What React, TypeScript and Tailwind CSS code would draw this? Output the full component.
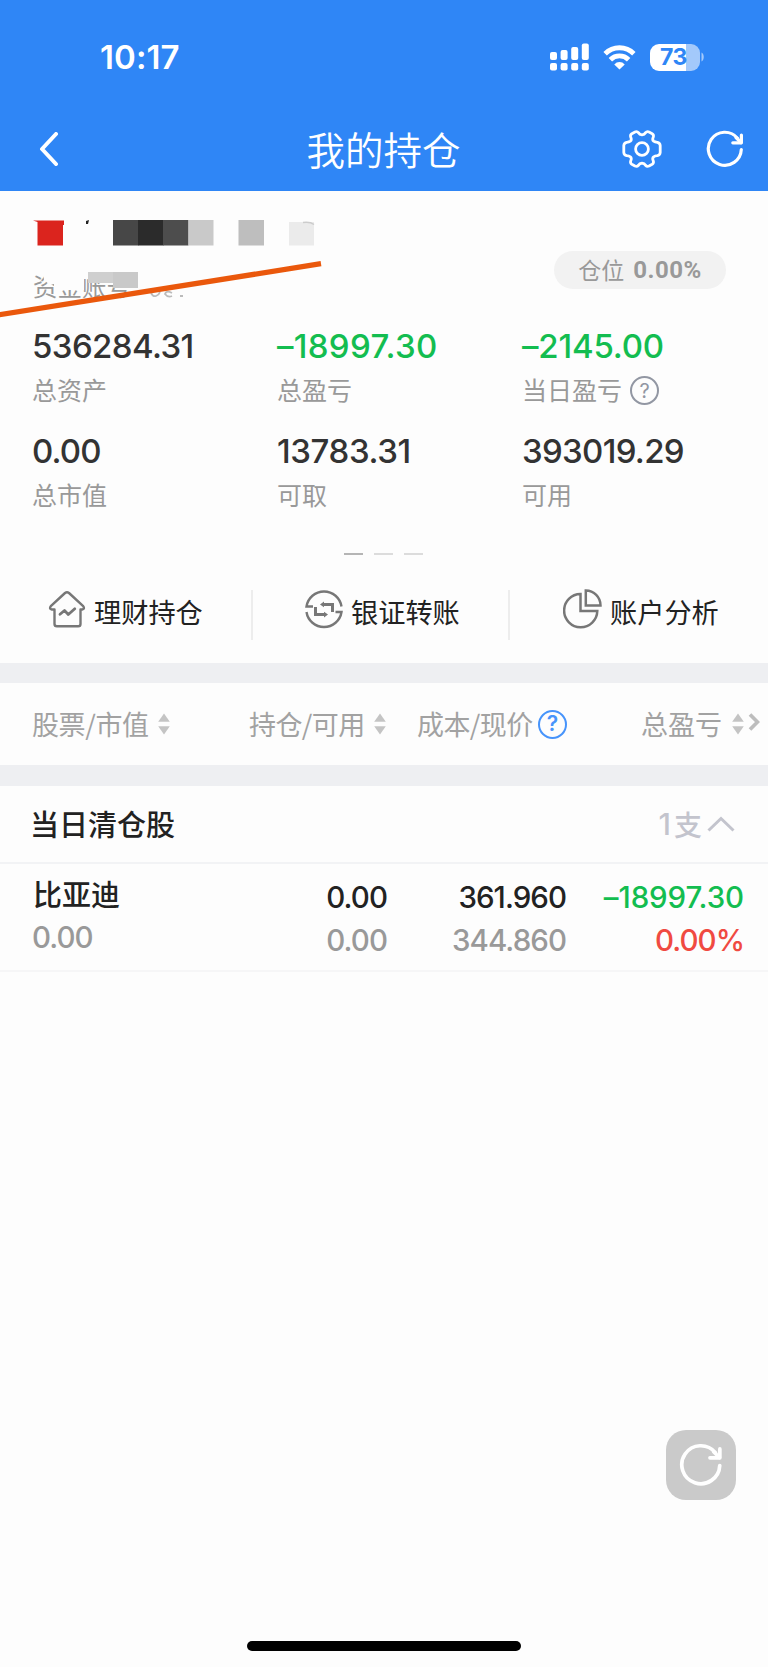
import React from "react";

const NUM = "font-['Inter','Noto_Sans_CJK_SC',sans-serif]";

function SignalIcon() {
  return (
    <svg width="39" height="28" viewBox="0 0 39 28" fill="#fff">
      <rect x="0" y="9" width="7" height="8" rx="2" />
      <rect x="10.6" y="7" width="7" height="10" rx="2" />
      <rect x="21.2" y="4" width="7" height="13" rx="2" />
      <rect x="31.8" y="0.5" width="7" height="16.5" rx="2" />
      <rect x="0" y="20" width="7" height="7.5" rx="2" />
      <rect x="10.6" y="20" width="7" height="7.5" rx="2" />
      <rect x="21.2" y="20" width="7" height="7.5" rx="2" />
      <rect x="31.8" y="20" width="7" height="7.5" rx="2" />
    </svg>
  );
}

function WifiIcon() {
  return (
    <svg width="33" height="28" viewBox="0 0 34 28" fill="none" stroke="#fff" strokeWidth="5">
      <path d="M2.2 10.6a21 21 0 0 1 29.6 0" />
      <path d="M7.6 16.8a13.3 13.3 0 0 1 18.8 0" />
      <path d="M17 27l-5.400-5.400a7.4 7.4 0 0 1 10.800 0z" fill="#fff" stroke="none" />
    </svg>
  );
}

function Battery() {
  return (
    <div className="flex items-center">
      <div className="flex h-[27px] w-[50px] items-center overflow-hidden rounded-[9px] bg-[linear-gradient(to_right,#fff_73%,#a3c9fb_73%)] pl-[10px]">
        <span className={`${NUM} text-[23px] leading-[27px] font-bold tracking-[-0.4px] text-[#2f86f6]`}>73</span>
      </div>
      <svg width="4" height="10" viewBox="0 0 4 10" className="ml-px">
        <path d="M0.5 0.5c3 1.6 3 7.400 0 9z" fill="#a3c9fb" />
      </svg>
    </div>
  );
}

function GearIcon() {
  return (
    <svg width="40" height="40" viewBox="-20 -20 40 40" fill="none" stroke="#fff" strokeWidth="2.8" strokeLinejoin="round">
      <circle r="6.4" />
      <path d="M0 -14.200Q2.500 -14.400 3.500 -16.200Q5 -17.900 7 -17L10.200 -15.300Q12 -14.200 11.300 -12Q10 -9 11.600 -7.800Q13 -6.800 15.300 -6.700Q18 -6.200 18.200 -3.500V3.500Q18 6.200 15.300 6.700Q13 6.800 11.600 7.800Q10 9 11.300 12Q12 14.200 10.200 15.300L7 17Q5 17.900 3.500 16.200Q2.500 14.400 0 14.200Q-2.500 14.400 -3.500 16.200Q-5 17.900 -7 17L-10.200 15.300Q-12 14.200 -11.300 12Q-10 9 -11.600 7.800Q-13 6.800 -15.300 6.700Q-18 6.200 -18.200 3.500V-3.500Q-18 -6.200 -15.300 -6.700Q-13 -6.800 -11.600 -7.800Q-10 -9 -11.300 -12Q-12 -14.200 -10.200 -15.300L-7 -17Q-5 -17.900 -3.500 -16.200Q-2.500 -14.400 0 -14.200Z" />
    </svg>
  );
}

function RefreshIcon({ size, stroke }: { size: number; stroke: number }) {
  return (
    <svg width={size} height={size} viewBox="0 0 40 40" fill="none" stroke="#fff" strokeWidth={stroke} strokeLinecap="round" strokeLinejoin="round">
      <path d="M36.300 20.500A16.500 16.500 0 1 1 32.500 9.200" />
      <path d="M36.400 6v7.800h-8.600" />
      <path d="M31 8.500l5 5" />
    </svg>
  );
}

function SortIcon() {
  return (
    <svg width="12" height="22" viewBox="0 0 12 22" fill="#c4c4c4">
      <path d="M6 0.500L11.800 8.800H0.200z" />
      <path d="M6 21.500L11.800 13.200H0.200z" />
    </svg>
  );
}

function HelpIcon({ className, stroke }: { className: string; stroke: string }) {
  return (
    <span className={`${NUM} flex h-[29px] w-[29px] items-center justify-center rounded-full ${stroke} ${className}`}>?</span>
  );
}

function HouseIcon() {
  return (
    <svg width="38" height="38" viewBox="0 0 38 38" fill="none" stroke="#777" strokeWidth="2.400" strokeLinejoin="round" strokeLinecap="round">
      <path d="M6.500 19.500H3.500Q1 18.500 2.800 16.200L17 3Q19 1.500 21 3L35.200 16.200Q37 18.500 34.500 19.500H32.500V34Q32.500 36.300 30.200 36.300H9Q6.500 36.300 6.500 34Z" />
      <path d="M12 24.300l4.500-3.800 3.800 4 6.500-5.700" strokeWidth="2.800" />
    </svg>
  );
}

function TransferIcon() {
  return (
    <svg width="38" height="40" viewBox="-19 -20 38 40" fill="none" stroke="#777" strokeWidth="2.400">
      <path d="M-11 -2.500H-17.500A17.700 17.700 0 0 1 17.500 -2.500" />
      <path d="M11.500 3H17.500A17.700 17.700 0 0 1 -17.500 3" />
      <path d="M-1 -4.500H8.500V3M1 5.500H-8.500V-2" strokeWidth="3" />
      <path d="M0 -7.500V-1.800L-4 -4.500zM0 8.500V2.800L4 5.500z" fill="#777" stroke="none" />
    </svg>
  );
}

function PieIcon() {
  return (
    <svg width="39" height="40" viewBox="0 0 39 40" fill="none" stroke="#777" strokeWidth="2.500">
      <path d="M17.500 5A16.600 16.600 0 1 0 34.300 22H17.500Z" />
      <path d="M22.800 1.500V16.500H37.500A15 15 0 0 0 22.800 1.500Z" />
    </svg>
  );
}

function Stat({ value, label, green, help, tracking }: { value: string; label: string; green?: boolean; help?: boolean; tracking: string }) {
  return (
    <div className="h-[105px]">
      <div className={`${NUM} h-[40px] whitespace-nowrap text-[33px] leading-[40px] font-medium ${tracking} ${green ? "text-[#13bd50]" : "text-[#333]"}`}>{value}</div>
      <div className="mt-[5px] flex h-[36px] items-center text-[25px] leading-[36px] text-[#999]">
        {label}
        {help && <HelpIcon className="ml-[8px] mt-[3px] text-[20px]" stroke="border-2 border-[#9297a3] text-[#9297a3]" />}
      </div>
    </div>
  );
}

function Action({ icon, label, pad }: { icon: React.ReactNode; label: string; pad: string }) {
  return (
    <div className={`flex items-center pb-[13px] ${pad}`}>
      {icon}
      <span className="ml-[8px] mt-[5px] text-[27.200px] leading-[40px] text-[#222]">{label}</span>
    </div>
  );
}

export default function App() {
  return (
    <div className="relative flex h-[1667px] w-[768px] flex-col overflow-hidden bg-[#fdfdfd] font-['Noto_Sans_CJK_SC',sans-serif]">
      <header className="h-[191px] shrink-0 bg-[#2f86f6] text-white">
        <div className="flex h-[107px] items-center pl-[100px] pr-[63px] pt-[7px]">
          <span className={`${NUM} text-[33px] leading-[40px] font-semibold tracking-[0.100px]`}>10:17</span>
          <div className="ml-auto flex items-center gap-[14px]">
            <SignalIcon />
            <WifiIcon />
            <Battery />
          </div>
        </div>
        <div className="grid h-[84px] grid-cols-[200px_1fr_200px] items-center">
          <svg width="20" height="34" viewBox="0 0 20 34" fill="none" stroke="#fff" strokeWidth="4" strokeLinecap="round" strokeLinejoin="round" className="ml-[39px]">
            <path d="M17 2L3 17l14 15" />
          </svg>
          <h1 className="pb-[3px] pr-px text-center text-[38.500px] leading-[56px] font-[350]">我的持仓</h1>
          <div className="flex items-center justify-end gap-[43px] pr-[23px]">
            <GearIcon />
            <RefreshIcon size={40} stroke={3.2} />
          </div>
        </div>
      </header>

      <section className="relative flex h-[135px] shrink-0">
        <div className="mt-[77px] h-[36px] pl-[33px] text-[24.500px] leading-[36px] text-[#999]">资金账号</div>
        <svg width="384" height="140" viewBox="0 0 384 140" className="absolute left-0 top-0">
          <g transform="translate(0,-1)">
            <g fill="#fdfdfd">
              <path d="M43 82H62V92L50 95L44 90Z" />
              <path d="M59 80H84V100H59Z" />
              <path d="M84 78H140V89H84Z" />
              <path d="M54 90L60 88V106H54Z" />
            </g>
            <path d="M33 30.500H64V35H63V55.500H37.500V32Z" fill="#db241e" />
            <path d="M86 31l3-1-1 4h-2z" fill="#222" />
            <rect x="113" y="30" width="25.500" height="25.500" fill="#474747" />
            <rect x="138" y="30" width="25.500" height="25.500" fill="#2b2b2b" />
            <rect x="163" y="30" width="25.500" height="25.500" fill="#4d4d4d" />
            <rect x="188.500" y="30" width="25" height="25.500" fill="#c9c9c9" />
            <rect x="238.500" y="30" width="25.500" height="25.500" fill="#bebebe" />
            <rect x="289" y="32" width="25" height="23.500" fill="#ebebeb" />
            <path d="M303 32.500q7-1 11 2" stroke="#ccc" strokeWidth="1.500" fill="none" />
            <rect x="88" y="82" width="25" height="11" fill="#cfcfcf" />
            <rect x="113" y="82" width="25" height="16" fill="#c9c9c9" />
            <path d="M151 103q2 4 5 3t4-4M172 103q-6-3-7 1 3 4 7 2M180 106h3" stroke="#bbb" strokeWidth="1.800" fill="none" />
          </g>
          <path d="M-2 124L321 72.700" stroke="#ea580c" strokeWidth="5.300" />
        </svg>
        <div className="ml-auto mr-[42px] mt-[60px] flex h-[38px] w-[172px] items-center justify-center rounded-full bg-[#f2f2f2] text-[#999]">
          <span className="-mt-[2px] text-[23px] leading-[35px]">仓位</span>
          <span className="ml-[9px] font-['Roboto',sans-serif] text-[24px] leading-[38px] font-bold tracking-[0.500px]">0.00%</span>
        </div>
      </section>

      <section className="grid h-[215px] shrink-0 grid-cols-[245px_245px_1fr] grid-rows-[105px_105px] pl-[32px]">
        <Stat value="536284.31" label="总资产" tracking="tracking-[-0.600px]" />
        <Stat value="–18997.30" label="总盈亏" green tracking="tracking-[0.300px]" />
        <Stat value="–2145.00" label="当日盈亏" green help tracking="tracking-[-0.200px]" />
        <Stat value="0.00" label="总市值" tracking="tracking-[-0.900px]" />
        <Stat value="13783.31" label="可取" tracking="tracking-[-0.400px]" />
        <Stat value="393019.29" label="可用" tracking="tracking-[-0.700px]" />
      </section>

      <div className="flex h-[26px] shrink-0 items-center justify-center gap-[11px] pr-[2px]">
        <i className="h-[2px] w-[19px] bg-[#b5b5b5]" />
        <i className="h-[2px] w-[19px] bg-[#dcdcdc]" />
        <i className="h-[2px] w-[19px] bg-[#dcdcdc]" />
      </div>

      <nav className="flex h-[96px] shrink-0 items-center">
        <div className="flex h-[50px] w-[253px] items-center border-r-2 border-[#ededed]">
          <Action icon={<HouseIcon />} label="理财持仓" pad="pl-[48px]" />
        </div>
        <div className="flex h-[50px] w-[257px] items-center border-r-2 border-[#ededed]">
          <Action icon={<TransferIcon />} label="银证转账" pad="pl-[52px]" />
        </div>
        <Action icon={<PieIcon />} label="账户分析" pad="pl-[53px]" />
      </nav>

      <div className="h-[20px] shrink-0 bg-[#eeeff2]" />

      <div className="flex h-[82px] shrink-0 items-center text-[27px] leading-[40px] whitespace-nowrap text-[#a2a2a2]">
        <div className="flex w-[249px] items-center gap-[9px] pl-[32px] tracking-[-0.400px]">股票/市值<SortIcon /></div>
        <div className="flex w-[168px] items-center gap-[9px] tracking-[-0.600px]">持仓/可用<SortIcon /></div>
        <div className="flex w-[224px] items-center gap-[5px] tracking-[-0.600px]">
          成本/现价
          <HelpIcon className="text-[21px] font-semibold" stroke="border-2 border-[#4794fb] text-[#4794fb]" />
        </div>
        <div className="flex items-center gap-[10px]">
          总盈亏
          <div className="flex items-center gap-[4px]">
            <SortIcon />
            <svg width="12" height="18" viewBox="0 0 12 18" fill="none" stroke="#bdbdbd" strokeWidth="3.700" className="-mt-[4px]">
              <path d="M2 1.500L9.500 9 2 16.500" />
            </svg>
          </div>
        </div>
      </div>

      <div className="h-[21px] shrink-0 bg-[#eeeff2]" />

      <div className="flex h-[78px] shrink-0 items-center justify-between border-b-2 border-[#f2f3f5] pl-[30px] pr-[33px]">
        <h2 className="-mt-[2px] text-[29px] leading-[42px] font-medium text-[#222]">当日清仓股</h2>
        <div className="flex items-center text-[28px] leading-[42px] font-medium text-[#c3c4cd]">
          <span className={`${NUM} mr-[3px] text-[30px]`}>1</span>支
          <svg width="28" height="16" viewBox="0 0 28 16" fill="none" stroke="#c3c4cd" strokeWidth="3" className="ml-[5px]">
            <path d="M1.500 14.500L14 2.500l12.500 12" />
          </svg>
        </div>
      </div>

      <div className="grid h-[108px] shrink-0 grid-cols-[187px_200px_179px_178px] content-start border-b-2 border-[#f6f6f7] text-right text-[29.500px] leading-[43px] font-[450] tracking-[-0.950px] text-[#222]">
        <div className="-mt-px pl-[33px] text-left text-[29px] tracking-normal">
          <div className="h-[61px] leading-[60px] font-medium">比亚迪</div>
          <div className={`${NUM} -ml-px h-[26px] text-[29.500px] leading-[26px] tracking-[-0.950px] text-[#999]`}>0.00</div>
        </div>
        <div className={`${NUM} pt-[12px]`}>
          <div>0.00</div>
          <div className="text-[#999]">0.00</div>
        </div>
        <div className={`${NUM} pt-[12px]`}>
          <div>361.960</div>
          <div className="text-[#999]">344.860</div>
        </div>
        <div className={`${NUM} pt-[12px]`}>
          <div className="tracking-[-0.100px] text-[#13bd50]">–18997.30</div>
          <div className="text-[#f04a41]">0.00%</div>
        </div>
      </div>

      <button className="absolute left-[666px] top-[1430px] flex h-[70px] w-[70px] items-center justify-center rounded-[20px] bg-[#cacaca]">
        <RefreshIcon size={46} stroke={3.2} />
      </button>
      <div className="absolute left-[247px] top-[1641px] h-[10px] w-[274px] rounded-full bg-black" />
    </div>
  );
}
